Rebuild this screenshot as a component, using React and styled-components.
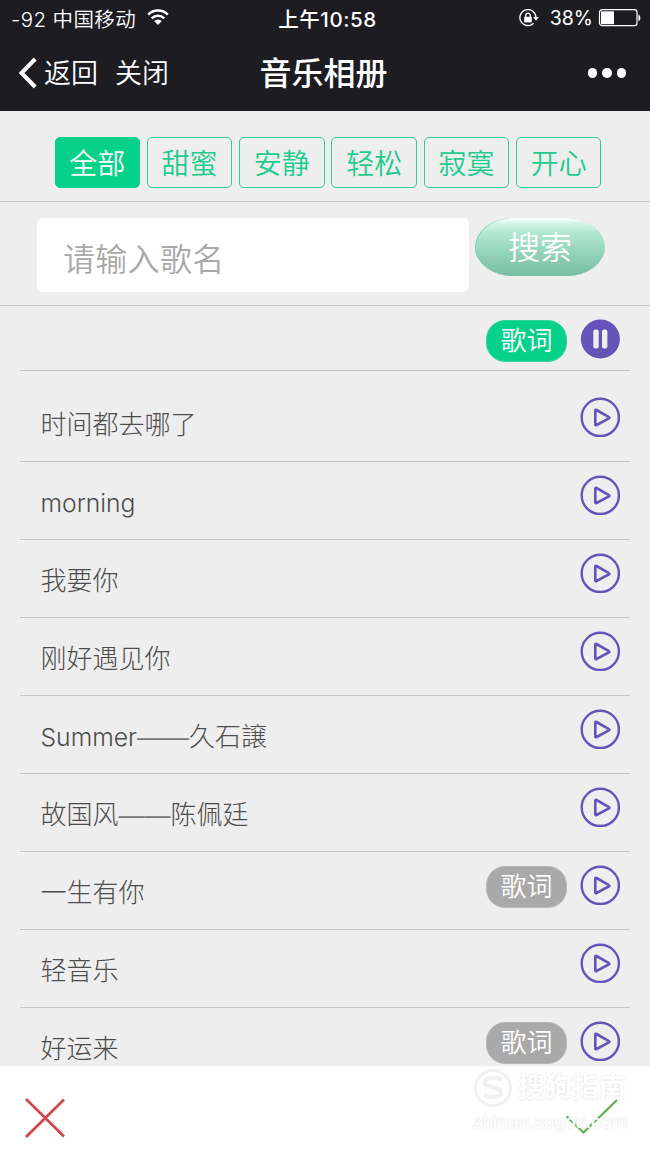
import React from 'react'
import styled, { createGlobalStyle } from 'styled-components'

const moods = ['全部', '甜蜜', '安静', '轻松', '寂寞', '开心']

const songs = [
    { id: 1, name: '时间都去哪了' },
    { id: 2, name: 'morning', latin: true },
    { id: 3, name: '我要你' },
    { id: 4, name: '刚好遇见你' },
    { id: 5, name: 'Summer', artist: '久石譲', latin: true },
    { id: 6, name: '故国风', artist: '陈佩廷' },
    { id: 7, name: '一生有你', lyrics: true },
    { id: 8, name: '轻音乐' },
    { id: 9, name: '好运来', lyrics: true },
]

const WifiIcon = () => (
    <svg width='22' height='17' viewBox='0 0 22 17' fill='none' stroke='#fff' strokeWidth='2.5'>
        <path d='M1.2 5.6a14 14 0 0 1 19.6 0' />
        <path d='M4.7 9.3a9 9 0 0 1 12.6 0' />
        <path d='M7.2 12.1a5.4 5.4 0 0 1 7.6 0L11 16z' fill='#fff' stroke='none' />
    </svg>
)

const LockIcon = () => (
    <svg width='21' height='18' viewBox='0 0 21 18' fill='none' stroke='#fff' strokeWidth='1.3'>
        <path d='M14.6 14.2A8 8 0 1 1 16.9 8' />
        <path d='M14.2 8h5.6L17 11.7z' fill='#fff' stroke='none' />
        <path d='M5.2 7.8h7.6v5.6H5.2z' fill='#fff' stroke='none' />
        <path d='M6.8 8V6.3a2.2 2.2 0 0 1 4.4 0V8' />
    </svg>
)

const BatteryIcon = () => (
    <svg width='43' height='18' viewBox='0 0 43 18' fill='none'>
        <rect x='1.5' y='.7' width='37.5' height='16' rx='2.6' stroke='#fff' strokeWidth='1.2' />
        <path d='M3 2.3h13v12.9H3z' fill='#fff' />
        <path d='M40.400 5.500c2.600.6 2.600 6 0 6.600z' fill='#fff' />
    </svg>
)

const PlayIcon = () => (
    <svg width='40' height='40' viewBox='0 0 40 40' fill='none' stroke='#6553b9'>
        <circle cx='20.3' cy='20.4' r='18.6' strokeWidth='2.4' />
        <path d='M15.3 13.6v13.7q0 1.3 1.2.7l12-6.3q1.7-1 0-1.9l-12-6.8q-1.2-.6-1.2.6z' strokeWidth='2.6' strokeLinejoin='round' />
    </svg>
)

const PauseIcon = () => (
    <svg width='40' height='40' viewBox='0 0 40 40'>
        <circle cx='20.4' cy='20' r='19.5' fill='#6553b9' />
        <rect x='13.3' y='10.5' width='5.4' height='19' rx='2.2' fill='#eee' />
        <rect x='22' y='10.5' width='5.4' height='19' rx='2.2' fill='#eee' />
    </svg>
)

const App = () => {
    return (
        <Page>
            <GlobalStyle />
            <Header>
                <StatusBar>
                    <Carrier>-92 中国移动 <WifiIcon /></Carrier>
                    <Time>上午10:58</Time>
                    <Power><LockIcon /><span>38%</span><BatteryIcon /></Power>
                </StatusBar>
                <NavBar>
                    <NavLinks>
                        <svg width='20' height='32' viewBox='0 0 20 32' fill='none' stroke='#fff' strokeWidth='4'>
                            <path d='M17.2 2 3.5 16l13.7 14' />
                        </svg>
                        <span>返回</span>
                        <span>关闭</span>
                    </NavLinks>
                    <Title>音乐相册</Title>
                    <More><i /><i /><i /></More>
                </NavBar>
            </Header>
            <Moods>
                {moods.map((mood, index) => (
                    <Mood key={mood} $active={index === 0}>{mood}</Mood>
                ))}
            </Moods>
            <Search>
                <SearchInput placeholder='请输入歌名' />
                <SearchButton>搜索</SearchButton>
            </Search>
            <List>
                <Current>
                    <Lyrics $active>歌词</Lyrics>
                    <PauseIcon />
                </Current>
                {songs.map(({ id, name, artist, latin, lyrics }) => (
                    <Song key={id}>
                        <SongName $latin={latin}>
                            {name}
                            {artist && <Artist><i>——</i>{artist}</Artist>}
                        </SongName>
                        {lyrics && <Lyrics>歌词</Lyrics>}
                        <PlayIcon />
                    </Song>
                ))}
            </List>
            <Footer>
                <svg width='40' height='40' viewBox='0 0 40 40' fill='none' stroke='#d2494d' strokeWidth='2.8'>
                    <path d='M1 1l38 37.5M39 1.5L1 39' />
                </svg>
                <svg width='54' height='36' viewBox='0 0 54 36' fill='none' stroke='#62ad51' strokeWidth='2.2'>
                    <path d='M2.5 18.5l17 16L53 2' />
                </svg>
                <Watermark>
                    <svg width='40' height='40' viewBox='0 0 40 40' fill='none' stroke='#f1f1f1'>
                        <circle cx='20' cy='20' r='17.5' strokeWidth='3' />
                        <path d='M29 12c-5-3-17-3-17 2.5 0 5 16 4 16 10 0 5-11 6-17 2.5' strokeWidth='4.5' />
                    </svg>
                    <b>搜狗指南</b>
                    <small>zhinan.sogou.com</small>
                </Watermark>
            </Footer>
        </Page>
    )
}

const GlobalStyle = createGlobalStyle`
*{
    box-sizing:border-box;
}
body{
    margin:0;
    background:#eee;
}
svg{
    display:block;
    flex:none;
}
`

const Page = styled.main`
display:flex;
flex-direction:column;
width:650px;
height:1156px;
overflow:hidden;
background:#eee;
font-family:'Liberation Sans', 'Noto Sans CJK SC', sans-serif;
`

const Header = styled.header`
height:111px;
background:#1d1c21;
color:#fff;
`

const StatusBar = styled.div`
display:grid;
grid-template-columns:1fr auto 1fr;
align-items:center;
height:35px;
padding:0 9px 0 11px;
font-family:Inter, 'Noto Sans CJK SC', sans-serif;
font-size:20px;
`

const Carrier = styled.div`
display:flex;
align-items:center;
gap:5px;
font-size:20.5px;
font-weight:350;
letter-spacing:.4px;
white-space:pre;
`

const Time = styled.div`
font-weight:500;
font-size:20.5px;
letter-spacing:.6px;
padding-left:3px;
`

const Power = styled.div`
display:flex;
align-items:center;
justify-content:flex-end;
font-size:19.5px;
span{
    margin:0 5px 0 10px;
}
`

const NavBar = styled.nav`
display:grid;
grid-template-columns:1fr auto 1fr;
align-items:center;
height:76px;
padding:0 24px 0 18px;
`

const NavLinks = styled.div`
display:flex;
align-items:center;
font-size:27px;
font-weight:350;
line-height:40px;
span{
    padding-top:2px;
    margin-left:6px;
}
span + span{
    margin-left:17px;
}
`

const Title = styled.h1`
margin:0;
padding-top:2px;
padding-left:3px;
font-size:32px;
font-weight:500;
line-height:44px;
`

const More = styled.div`
display:flex;
justify-content:flex-end;
gap:5px;
i{
    width:9.5px;
    height:9.5px;
    border-radius:50%;
    background:#fff;
}
`

const Moods = styled.div`
display:flex;
gap:6.8px;
height:91px;
padding:26px 0 0 54.5px;
border-bottom:1px solid #c4c4c4;
`

const Mood = styled.button`
width:85.5px;
height:51px;
padding:0 0 2px;
border:1.5px solid ${(props) => (props.$active ? '#06d18b' : '#2fcb95')};
border-radius:5px;
background:${(props) => (props.$active ? '#06d18b' : 'transparent')};
color:${(props) => (props.$active ? '#fff' : '#1fcb8e')};
font:350 28px 'Noto Sans CJK SC', sans-serif;
line-height:40px;
`

const Search = styled.form`
display:flex;
align-items:flex-start;
gap:6px;
height:104px;
padding:16px 0 0 37px;
border-bottom:1px solid #c4c4c4;
`

const SearchInput = styled.input`
width:432px;
height:74px;
padding:4px 26px 0;
border:0;
border-radius:6px;
background:#fff;
font:350 32px 'Noto Sans CJK SC', sans-serif;
letter-spacing:.3px;
&::placeholder{
    color:#a9a9a9;
}
`

const SearchButton = styled.button`
width:130px;
height:58px;
padding:0 0 4px;
border:0;
border-radius:38px / 29px;
background:linear-gradient(#fff 0, #d3f3e6 10%, #b2e8d3 25%, #94d3bb 60%, #76bda2 100%);
box-shadow:inset 1px 0 0 #8accb3;
color:#fff;
font:350 32px 'Noto Sans CJK SC', sans-serif;
line-height:50px;
`

const List = styled.section`
flex:1;
min-height:0;
overflow:hidden;
padding:0 20px;
`

const Song = styled.div`
display:flex;
align-items:flex-start;
height:78px;
padding:13px 10px 0 20.5px;
border-bottom:1px solid #c4c4c4;
&:nth-child(2){
    height:91px;
    padding-top:26px;
}
`

const Current = styled(Song)`
justify-content:flex-end;
height:65px;
`

const SongName = styled.span`
flex:1;
padding-top:9px;
color:#4c4c4c;
font-family:Inter, 'Noto Sans CJK SC', sans-serif;
font-size:${(props) => (props.$latin ? '24.7px' : '26px')};
font-weight:300;
line-height:38px;
`

// zero line height keeps the baseline of the song name
const Artist = styled.span`
font-family:'Noto Sans CJK SC', sans-serif;
font-size:26px;
line-height:0;
i{
    color:#777;
    font-family:'Liberation Sans', sans-serif;
    font-style:normal;
}
`

const Lyrics = styled.button`
width:81px;
height:42px;
margin:1px 13px 0 0;
padding:0 0 4px;
border:1px solid ${(props) => (props.$active ? '#3cd39d' : '#b9b9b9')};
border-radius:19px;
background:${(props) => (props.$active ? '#06d18b' : '#a9a9a9')};
color:#fff;
font:350 26px 'Noto Sans CJK SC', sans-serif;
line-height:36px;
`

const Footer = styled.footer`
position:relative;
display:flex;
justify-content:space-between;
height:90px;
padding:32px 32px 0 25px;
background:#fff;
`

// sits over the footer and the confirm tick
const Watermark = styled.div`
position:absolute;
top:2px;
left:473px;
display:grid;
grid-template-columns:40px auto;
column-gap:5px;
color:#fff;
text-shadow:0 0 2px #d4d4d4;
b{
    font-size:27px;
    line-height:40px;
}
small{
    grid-column:1 / 3;
    font-size:19px;
    line-height:28px;
}
`

export default App
